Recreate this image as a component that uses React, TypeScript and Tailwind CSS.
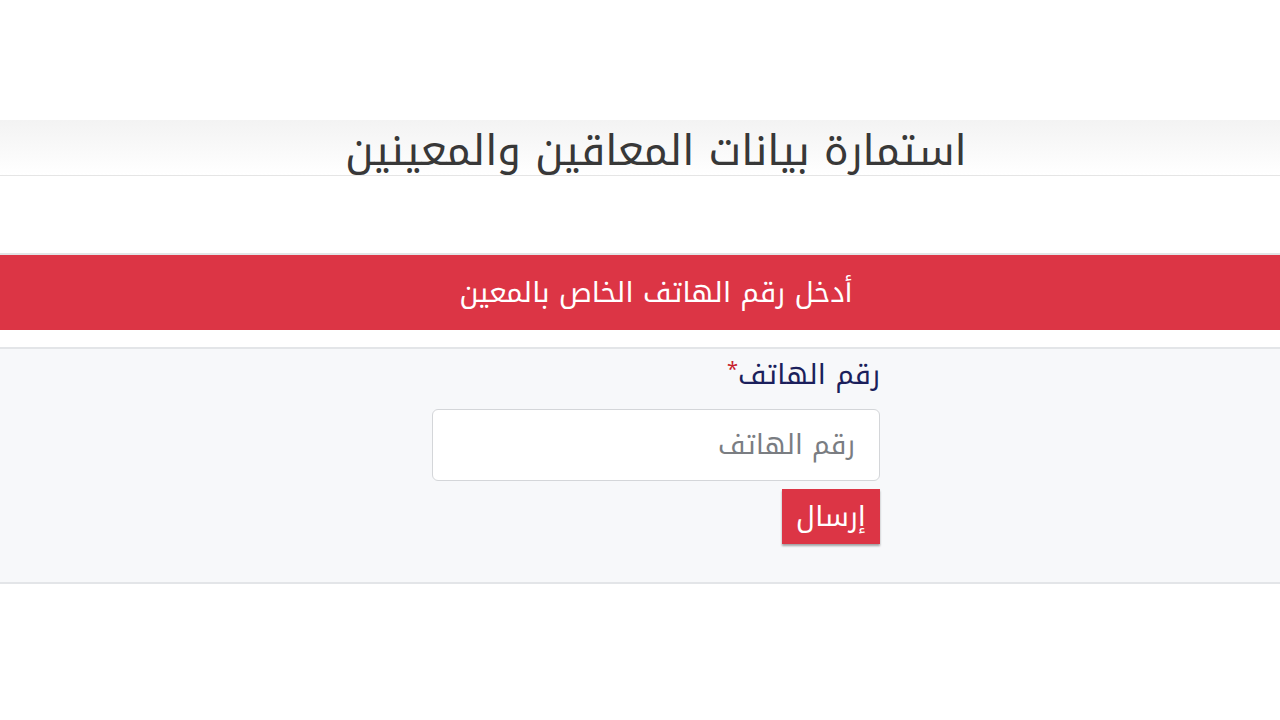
export default function App() {
  return (
    <main
      dir="rtl"
      className="min-h-screen w-full bg-white font-['Noto_Kufi_Arabic','DejaVu_Sans',sans-serif]"
    >
      <div className="h-[120px]" />

      <header className="border-b border-[#e5e5e5] bg-gradient-to-b from-[#f3f3f3] to-white pl-[32px]">
        <h1 className="h-[55px] text-center text-[42px] leading-[62px] text-[#383838]">
          استمارة بيانات المعاقين والمعينين
        </h1>
      </header>

      <div className="h-[77px]" />

      <div className="border-t-2 border-[#e2e3e5] bg-[#dc3545] pl-[32px]">
        <p className="h-[75px] text-center text-[28px] leading-[75px] text-white">
          أدخل رقم الهاتف الخاص بالمعين
        </p>
      </div>

      <div className="h-[17px]" />

      <section className="border-y-2 border-[#e3e5e8] bg-[#f7f8fa] pl-[32px]">
        <div className="mx-auto flex w-[448px] flex-col pb-[38px] pt-[6px]">
          <label className="text-[28px] leading-[40px] text-[#1b1f5c]">
            رقم الهاتف
            <span className="align-top text-[20px] leading-[28px] text-[#c81e2e]">*</span>
          </label>
          <input
            placeholder="رقم الهاتف"
            className="mt-[14px] h-[72px] w-full rounded-[6px] border border-[#d4d6d9] bg-white px-[24px] text-[27px] text-[#333] placeholder:text-[#7a7d82] outline-none"
          />
          <div className="mt-[8px] flex">
            <button className="h-[55px] w-[98px] bg-[#dc3545] text-[28px] leading-[55px] text-white shadow-[0_2px_2px_rgba(0,0,0,0.35)]">
              إرسال
            </button>
          </div>
        </div>
      </section>
    </main>
  );
}
